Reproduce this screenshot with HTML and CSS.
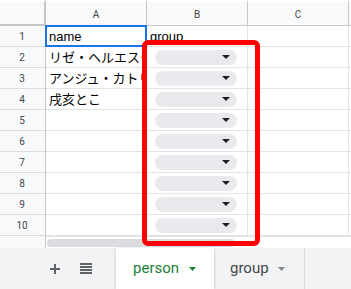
FILE: index.html
```html
<!DOCTYPE html>
<html lang="ja">
<head>
<meta charset="utf-8">
<title>Sheet</title>
<link rel="stylesheet" href="styles.css">
</head>
<body>
<div class="sheet">
  <div class="grid">
    <div class="corner"></div>
    <div class="colhead">A</div>
    <div class="colhead">B</div>
    <div class="colhead">C</div>
    <div class="colhead edge"></div>

    <div class="rowhead">1</div>
    <div class="cell selected"><span class="txt">name</span></div>
    <div class="cell"><span class="txt">group</span></div>
    <div class="cell"></div>
    <div class="cell edge"></div>

    <div class="rowhead">2</div>
    <div class="cell"><span class="txt">リゼ・ヘルエスタ</span></div>
    <div class="cell chipcell"><span class="chip"><svg class="arrow" width="8" height="4" viewBox="0 0 8 4"><polygon points="0,0 8,0 4,4"/></svg></span></div>
    <div class="cell"></div>
    <div class="cell edge"></div>

    <div class="rowhead">3</div>
    <div class="cell"><span class="txt">アンジュ・カトリーナ</span></div>
    <div class="cell chipcell"><span class="chip"><svg class="arrow" width="8" height="4" viewBox="0 0 8 4"><polygon points="0,0 8,0 4,4"/></svg></span></div>
    <div class="cell"></div>
    <div class="cell edge"></div>

    <div class="rowhead">4</div>
    <div class="cell"><span class="txt">戌亥とこ</span></div>
    <div class="cell chipcell"><span class="chip"><svg class="arrow" width="8" height="4" viewBox="0 0 8 4"><polygon points="0,0 8,0 4,4"/></svg></span></div>
    <div class="cell"></div>
    <div class="cell edge"></div>

    <div class="rowhead">5</div>
    <div class="cell"></div>
    <div class="cell chipcell"><span class="chip"><svg class="arrow" width="8" height="4" viewBox="0 0 8 4"><polygon points="0,0 8,0 4,4"/></svg></span></div>
    <div class="cell"></div>
    <div class="cell edge"></div>

    <div class="rowhead">6</div>
    <div class="cell"></div>
    <div class="cell chipcell"><span class="chip"><svg class="arrow" width="8" height="4" viewBox="0 0 8 4"><polygon points="0,0 8,0 4,4"/></svg></span></div>
    <div class="cell"></div>
    <div class="cell edge"></div>

    <div class="rowhead">7</div>
    <div class="cell"></div>
    <div class="cell chipcell"><span class="chip"><svg class="arrow" width="8" height="4" viewBox="0 0 8 4"><polygon points="0,0 8,0 4,4"/></svg></span></div>
    <div class="cell"></div>
    <div class="cell edge"></div>

    <div class="rowhead">8</div>
    <div class="cell"></div>
    <div class="cell chipcell"><span class="chip"><svg class="arrow" width="8" height="4" viewBox="0 0 8 4"><polygon points="0,0 8,0 4,4"/></svg></span></div>
    <div class="cell"></div>
    <div class="cell edge"></div>

    <div class="rowhead">9</div>
    <div class="cell"></div>
    <div class="cell chipcell"><span class="chip"><svg class="arrow" width="8" height="4" viewBox="0 0 8 4"><polygon points="0,0 8,0 4,4"/></svg></span></div>
    <div class="cell"></div>
    <div class="cell edge"></div>

    <div class="rowhead">10</div>
    <div class="cell"></div>
    <div class="cell chipcell"><span class="chip"><svg class="arrow" width="8" height="4" viewBox="0 0 8 4"><polygon points="0,0 8,0 4,4"/></svg></span></div>
    <div class="cell"></div>
    <div class="cell edge"></div>

    <div class="scrollhead"></div>
    <div class="scrolltrack"><span class="thumb"></span></div>
  </div>

  <div class="tabs">
    <div class="tools">
      <svg class="plus" width="10" height="10" viewBox="0 0 10 10"><path d="M5 0V10M0 5H10"/></svg>
      <svg class="list" width="12" height="11" viewBox="0 0 12 11"><rect x="0" y="0" width="12" height="2"/><rect x="0" y="3" width="12" height="2"/><rect x="0" y="6" width="12" height="2"/><rect x="0" y="9" width="12" height="2"/></svg>
    </div>
    <div class="tab active"><span class="tabname">person</span><svg class="tabarrow" width="7" height="4" viewBox="0 0 7 4"><polygon points="0,0 7,0 3.5,4"/></svg></div>
    <div class="tab"><span class="tabname">group</span><svg class="tabarrow" width="7" height="4" viewBox="0 0 7 4"><polygon points="0,0 7,0 3.5,4"/></svg></div>
  </div>

  <div class="callout"></div>
</div>
</body>
</html>
```

FILE: styles.css
```css
* { box-sizing: border-box; }

html, body {
  margin: 0;
  padding: 0;
  background: #ffffff;
  overflow: hidden;
}

.sheet {
  position: relative;
  width: 351px;
  height: 289px;
  font-family: "Liberation Sans", "Noto Sans CJK JP", sans-serif;
}

.grid {
  display: grid;
  grid-template-columns: 46px 101px 101px 101px 1fr;
  grid-template-rows: 26px repeat(10, 21px) 12px;
}

.corner {
  background: #f8f9fa;
  border-top: 2px solid #ffffff;
  border-right: 2px solid #c4c7c5;
  border-bottom: 2px solid #c4c7c5;
}

.colhead {
  background: #f8f9fa;
  border-top: 2px solid #ffffff;
  border-right: 1px solid #c4c7c5;
  border-bottom: 1px solid #c4c7c5;
  display: flex;
  align-items: center;
  justify-content: center;
  font-family: Roboto, "Liberation Sans", sans-serif;
  font-size: 10px;
  color: #444746;
  padding-top: 1px;
}

.colhead.edge { border-right: none; }

.rowhead {
  background: #f8f9fa;
  border-right: 1px solid #c4c7c5;
  border-bottom: 1px solid #dadce0;
  display: flex;
  align-items: center;
  justify-content: center;
  font-family: Roboto, "Liberation Sans", sans-serif;
  font-size: 10px;
  color: #444746;
  padding-right: 1px;
}

.cell {
  position: relative;
  border-right: 1px solid #e2e3e3;
  border-bottom: 1px solid #e2e3e3;
  display: flex;
  align-items: flex-end;
  padding: 0 0 1px 3px;
  overflow: hidden;
  white-space: nowrap;
  font-size: 13px;
  line-height: 16px;
  color: #000000;
}

.cell.edge { border-right: none; }

.cell.selected { overflow: visible; }

.cell.selected::after {
  content: "";
  position: absolute;
  top: -1px;
  left: -1px;
  right: -1px;
  bottom: -1px;
  border: 2px solid #1a73e8;
}

.txt { display: block; }

.chipcell {
  align-items: center;
  padding: 0 0 0 8px;
}

.chip {
  width: 82px;
  height: 15px;
  border-radius: 8px;
  background: #e8eaed;
  display: flex;
  align-items: center;
  justify-content: flex-end;
  padding-right: 7px;
}

.arrow { fill: #1f1f1f; display: block; }

.scrollhead {
  background: #f8f9fa;
  border-right: 1px solid #c4c7c5;
}

.scrolltrack {
  grid-column: 2 / 6;
  display: flex;
  align-items: center;
  padding-left: 1px;
  border-top: 1px solid #e2e3e3;
}

.thumb {
  display: block;
  width: 188px;
  height: 8px;
  border-radius: 4px;
  background: #dadce0;
}

.tabs {
  display: flex;
  height: 41px;
  background: #f1f3f4;
}

.tools {
  width: 116px;
  display: flex;
  align-items: center;
  padding-left: 50px;
  gap: 20px;
}

.plus { stroke: #5f6368; stroke-width: 2; fill: none; display: block; }
.list { fill: #5f6368; display: block; }

.tab {
  display: flex;
  align-items: center;
  font-family: Roboto, "Liberation Sans", sans-serif;
  font-size: 15px;
  color: #444746;
  width: 91px;
  padding-left: 16px;
  border-right: 1px solid #dadce0;
}

.tab .tabarrow { fill: #80868b; margin-left: 9px; display: block; }

.tab.active {
  width: 98px;
  padding-left: 17px;
  background: #ffffff;
  color: #188038;
  border-right: none;
  box-shadow: 0 1px 3px rgba(60, 64, 67, 0.3);
  position: relative;
}

.tab.active .tabarrow { fill: #188038; margin-left: 10px; }

.tabname { display: block; line-height: 20px; padding-bottom: 2px; }

.callout {
  position: absolute;
  left: 142px;
  top: 40px;
  width: 118px;
  height: 206px;
  border: 5px solid #ff0000;
  border-radius: 6px;
}
```
